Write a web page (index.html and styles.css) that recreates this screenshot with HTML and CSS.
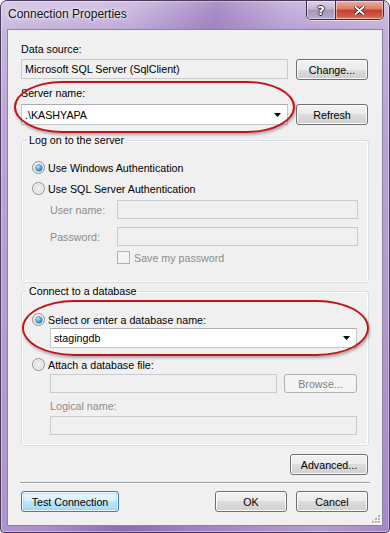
FILE: index.html
```html
<!DOCTYPE html>
<html lang="en">
<head>
    <meta charset="UTF-8">
    <meta name="viewport" content="width=device-width, initial-scale=1.0">
    <title>Connection Properties</title>
    <link rel="stylesheet" href="styles.css">
</head>
<body>
    <div class="window">
        <div class="titlebar">
            <span class="title">Connection Properties</span>
            <div class="caption-buttons">
                <span class="cap-btn help">?</span>
                <span class="cap-btn close">
                    <svg width="11" height="9" viewBox="0 0 11 9">
                        <path d="M1.5 1 L9.5 8 M9.5 1 L1.5 8" stroke="#3a1a18" stroke-width="3.6" stroke-linecap="round"/>
                        <path d="M1.5 1 L9.5 8 M9.5 1 L1.5 8" stroke="#fff" stroke-width="2" stroke-linecap="round"/>
                    </svg>
                </span>
            </div>
        </div>

        <div class="client">
            <div class="field-label">Data source:</div>
            <div class="row">
                <div class="textbox readonly wide">Microsoft SQL Server (SqlClient)</div>
                <button class="btn">Change...</button>
            </div>

            <div class="field-label server-label">Server name:</div>
            <div class="row server-row">
                <div class="combo wide">
                    <span class="combo-text">.\KASHYAPA</span>
                    <svg class="arrow" width="7" height="4" viewBox="0 0 7 4"><path d="M0 0 H7 L3.5 4 Z" fill="#000"/></svg>
                </div>
                <button class="btn">Refresh</button>
            </div>

            <fieldset class="group logon">
                <legend>Log on to the server</legend>
                <div class="radio-row">
                    <span class="radio checked"></span>
                    <span>Use Windows Authentication</span>
                </div>
                <div class="radio-row">
                    <span class="radio"></span>
                    <span>Use SQL Server Authentication</span>
                </div>
                <div class="auth">
                    <span class="muted">User name:</span>
                    <div class="textbox disabled"></div>
                    <span class="muted">Password:</span>
                    <div class="textbox disabled"></div>
                </div>
                <div class="check-row">
                    <span class="checkbox"></span>
                    <span class="muted">Save my password</span>
                </div>
            </fieldset>

            <fieldset class="group database">
                <legend>Connect to a database</legend>
                <div class="radio-row short">
                    <span class="radio checked"></span>
                    <span>Select or enter a database name:</span>
                </div>
                <div class="combo db-combo">
                    <span class="combo-text">stagingdb</span>
                    <svg class="arrow" width="7" height="4" viewBox="0 0 7 4"><path d="M0 0 H7 L3.5 4 Z" fill="#000"/></svg>
                </div>
                <div class="radio-row short attach">
                    <span class="radio"></span>
                    <span>Attach a database file:</span>
                </div>
                <div class="attach-row">
                    <div class="textbox disabled file-box"></div>
                    <button class="btn btn-disabled browse">Browse...</button>
                </div>
                <div class="field-label muted logical-label">Logical name:</div>
                <div class="textbox disabled logical-box"></div>
            </fieldset>

            <button class="btn advanced">Advanced...</button>
            <div class="separator"></div>

            <div class="footer">
                <button class="btn btn-default test-btn">Test Connection</button>
                <button class="btn ok-btn">OK</button>
                <button class="btn">Cancel</button>
            </div>

            <!-- red annotation rings drawn over the dialog -->
            <span class="ring server-ring"></span>
            <span class="ring db-ring"></span>

            <svg class="grip" width="10" height="10" viewBox="0 0 10 10">
                <g fill="#fff">
                    <rect x="8" y="2" width="2" height="2"/><rect x="8" y="5" width="2" height="2"/><rect x="8" y="8" width="2" height="2"/>
                    <rect x="5" y="5" width="2" height="2"/><rect x="5" y="8" width="2" height="2"/><rect x="2" y="8" width="2" height="2"/>
                </g>
                <g fill="#b4b4b4">
                    <rect x="7" y="1" width="2" height="2"/><rect x="7" y="4" width="2" height="2"/><rect x="7" y="7" width="2" height="2"/>
                    <rect x="4" y="4" width="2" height="2"/><rect x="4" y="7" width="2" height="2"/><rect x="1" y="7" width="2" height="2"/>
                </g>
            </svg>
        </div>
    </div>
</body>
</html>
```

FILE: styles.css
```css
* {
    margin: 0;
    padding: 0;
    box-sizing: border-box;
}

body {
    font-family: 'Liberation Sans', Arial, sans-serif;
    font-size: 10.7px;
    color: #000;
    background: #fff;
}

.window {
    width: 390px;
    height: 533px;
    border: 1px solid #4b3c5e;
    border-radius: 7px 7px 4px 4px;
    padding: 0 6px 6px;
    display: flex;
    flex-direction: column;
    background:
        linear-gradient(100deg, rgba(255,255,255,0.3) 0%, rgba(255,255,255,0.15) 28%, rgba(110,70,150,0.3) 45%, rgba(255,255,255,0.05) 60%, rgba(255,255,255,0.25) 85%, rgba(255,255,255,0.1) 100%),
        linear-gradient(to bottom, #c9b5de 0%, #b299cf 30px, #a385c5 120px, #9b7bbf 100%);
    box-shadow: inset 0 0 0 1px rgba(255,255,255,0.35);
}

/* title bar */
.titlebar {
    height: 28px;
    display: flex;
    align-items: flex-start;
}

.title {
    margin: 6px 0 0 1px;
    font-size: 12px;
    line-height: 15px;
    color: #111;
    text-shadow: 0 0 6px rgba(255,255,255,0.9), 0 0 3px rgba(255,255,255,0.9);
}

.caption-buttons {
    margin-left: auto;
    margin-right: -1px;
    display: flex;
    border: 1px solid #3b2d4a;
    border-top: none;
    border-radius: 0 0 5px 5px;
    overflow: hidden;
    box-shadow: 0 1px 0 rgba(255,255,255,0.5);
}

.cap-btn {
    height: 18px;
    display: flex;
    align-items: center;
    justify-content: center;
    box-shadow: inset 0 0 0 1px rgba(255,255,255,0.45);
}

.cap-btn.help {
    width: 29px;
    border-right: 1px solid #3b2d4a;
    background: linear-gradient(to bottom, #ddd3e8 0%, #c2b6d1 45%, #a697b9 50%, #b8abc9 100%);
    color: #fff;
    font-family: 'DejaVu Sans', sans-serif;
    font-weight: bold;
    font-size: 13px;
    text-shadow: 1px 0 0 #3a3046, -1px 0 0 #3a3046, 0 1px 0 #3a3046, 0 -1px 0 #3a3046;
}

.cap-btn.close {
    width: 47px;
    background: linear-gradient(to bottom, #eab0a3 0%, #dc7b67 45%, #c5412c 50%, #d25b43 85%, #e2866b 100%);
}

/* client area */
.client {
    position: relative;
    height: 497px;
    background: #f0f0f0;
    border: 1px solid #8e7fa3;
    padding: 13px 13px 0;
    display: flex;
    flex-direction: column;
}

.field-label {
    line-height: 13px;
    height: 13px;
}

.server-label {
    margin-top: 7px;
}

.row {
    display: flex;
    gap: 8px;
    margin-top: 3px;
}

.server-row {
    margin-top: 4px;
}

.textbox {
    height: 19px;
    border: 1px solid #cfd2d7;
    border-top-color: #abadb3;
    background: #fff;
    padding: 0 3px;
    line-height: 17px;
    white-space: nowrap;
}

.textbox.wide,
.combo.wide {
    width: 267px;
}

.textbox.readonly {
    height: 20px;
    line-height: 18px;
    background: #f0f0f0;
    border-color: #c9cbce;
}

.textbox.disabled {
    background: #f0f0f0;
    border-color: #c9cbce;
}

.combo {
    height: 21px;
    border: 1px solid #c5c8cf;
    border-top-color: #abadb3;
    background: #fff;
    display: flex;
    align-items: center;
    padding: 0 6px 0 3px;
}

.combo-text {
    flex: 1;
}

.arrow {
    display: block;
}

.btn {
    font: inherit;
    color: #000;
    width: 72px;
    height: 21px;
    border: 1px solid #707070;
    border-radius: 3px;
    background: linear-gradient(to bottom, #f2f2f2 0%, #ebebeb 50%, #dddddd 50%, #cfcfcf 100%);
    box-shadow: inset 0 0 0 1px #fcfcfc;
    flex-shrink: 0;
}

.btn-default {
    border-color: #3c7fb1;
    background: linear-gradient(to bottom, #eaf6fd 0%, #d9f0fc 50%, #bee6fd 50%, #a7d9f5 100%);
    box-shadow: inset 0 0 0 1px #e8f6fd, inset 0 0 2px 1px #6ccbf5;
}

.btn-disabled {
    border-color: #adb2b5;
    background: #f4f4f4;
    color: #838383;
    box-shadow: none;
}

/* group boxes */
.group {
    border: 1px solid #d5dfe5;
    border-radius: 3px;
    box-shadow: inset 0 0 0 1px #fff;
    min-width: 0;
}

.group legend {
    line-height: 13px;
    margin-left: -5px;
    padding: 0 2px;
}

.logon {
    margin-top: 9px;
    padding: 10px 10px 18px;
}

.database {
    margin-top: 2px;
    padding: 13px 10px 10px;
}

.radio-row {
    display: flex;
    align-items: center;
    gap: 3px;
    height: 21px;
}

.radio-row.short {
    height: 17px;
}

.radio-row.attach {
    margin-top: 8px;
}

.radio {
    position: relative;
    width: 13px;
    height: 13px;
    border-radius: 50%;
    border: 1px solid #8e8f8f;
    background: radial-gradient(circle at 50% 50%, #f4f4f4 0%, #e2e2e2 55%, #cfcfcf 100%);
    box-shadow: inset 0 0 0 1px #f6f6f6;
}

.radio.checked::after {
    content: '';
    position: absolute;
    left: 2.5px;
    top: 2.5px;
    width: 6px;
    height: 6px;
    border-radius: 50%;
    background: radial-gradient(circle at 35% 30%, #b9ecfd 0%, #4fb3e6 40%, #1d5f93 100%);
    box-shadow: 0 0 0 0.5px #29577f;
}

.muted {
    color: #8d8d8d;
}

.auth {
    display: grid;
    grid-template-columns: 67px 241px;
    row-gap: 8px;
    align-items: center;
    margin: 1px 0 0 18px;
}

.check-row {
    display: flex;
    align-items: center;
    gap: 4px;
    height: 13px;
    margin: 5px 0 0 85px;
}

.checkbox {
    width: 13px;
    height: 13px;
    border: 1px solid #b1b1b1;
    background: #f4f4f4;
}

.db-combo {
    width: 307px;
    height: 20px;
    margin-left: 18px;
}

.attach-row {
    display: flex;
    gap: 7px;
    margin: 1px 0 0 18px;
}

.file-box {
    width: 227px;
}

.browse {
    width: 73px;
    height: 19px;
}

.logical-label {
    margin: 7px 0 0 18px;
}

.logical-box {
    width: 307px;
    margin: 3px 0 0 18px;
}

.advanced {
    width: 78px;
    margin-top: 8px;
    margin-right: 1px;
    align-self: flex-end;
}

.separator {
    margin: 7px -1px 0;
    height: 2px;
    border-top: 1px solid #a0a0a0;
    border-bottom: 1px solid #fff;
}

.footer {
    display: flex;
    margin-top: 7px;
    margin-right: 1px;
    gap: 9px;
}

.test-btn {
    width: 98px;
}

.ok-btn {
    margin-left: auto;
}

/* annotation overlays */
.ring {
    position: absolute;
    border: 2px solid #c1141c;
    box-shadow: 1px 2px 3px rgba(0,0,0,0.3);
    pointer-events: none;
}

.server-ring {
    left: 6px;
    top: 51px;
    width: 281px;
    height: 52px;
    border-radius: 48px / 26px;
}

.db-ring {
    left: 14px;
    top: 270px;
    width: 347px;
    height: 56px;
    border-radius: 52px / 28px;
}

.grip {
    position: absolute;
    right: 1px;
    bottom: 1px;
}
```
